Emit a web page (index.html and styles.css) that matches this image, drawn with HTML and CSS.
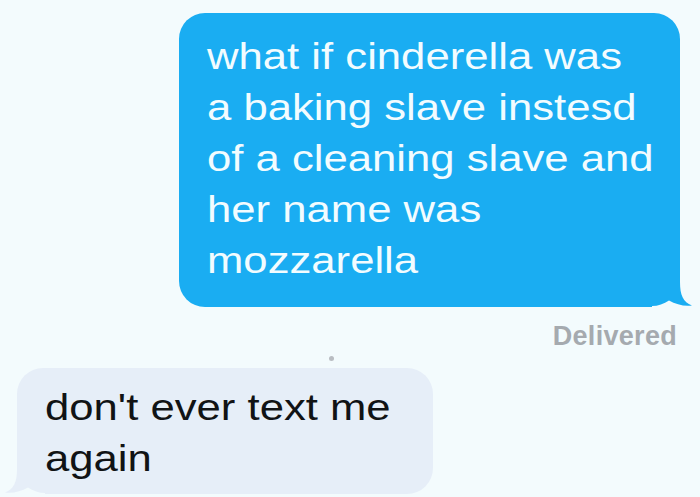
FILE: index.html
```html
<!DOCTYPE html>
<html>
<head>
<meta charset="utf-8">
<link rel="stylesheet" href="styles.css">
</head>
<body>
<div class="thread">
  <div class="bubble out">
    <span class="txt">what if cinderella was<br>a baking slave instesd<br>of a cleaning slave and<br>her name was<br>mozzarella</span>
    <svg class="tail tail-out" width="42" height="32" viewBox="0 0 42 32">
      <rect x="0" y="0" width="42" height="32" fill="#f3fbfd"/>
      <path d="M0,0 H28 V6 C28,19 31,26 40,29.5 C32,30.5 24,28.5 17,24.5 C12,28 6,30 0,30 Z" fill="#1aadf2"/>
    </svg>
  </div>
  <div class="status">Delivered</div>
  <div class="dot"></div>
  <div class="bubble in">
    <span class="txt">don't ever text me<br>again</span>
    <svg class="tail tail-in" width="42" height="32" viewBox="0 0 42 32">
      <rect x="0" y="0" width="42" height="32" fill="#f3fbfd"/>
      <path d="M42,0 H14 V6 C14,19 11,26 2,29.5 C10,30.5 18,28.5 25,24.5 C30,28 36,30 42,30 Z" fill="#e6eef8"/>
    </svg>
  </div>
</div>
</body>
</html>
```

FILE: styles.css
```css
html, body {
  margin: 0;
  padding: 0;
  background: #f3fbfd;
  overflow: hidden;
}

body {
  width: 700px;
  height: 497px;
  font-family: "Liberation Sans", Arial, Helvetica, sans-serif;
}

.thread {
  display: flex;
  flex-direction: column;
  padding-top: 13px;
}

.bubble {
  position: relative;
  box-sizing: border-box;
  border-radius: 26px;
  font-size: 37px;
  line-height: 51px;
}

.txt {
  display: inline-block;
  white-space: nowrap;
  transform: scaleX(1.18);
  transform-origin: 0 0;
}

.out {
  margin-left: 179px;
  width: 501px;
  padding: 18px 0 21px 28px;
  background: #1aadf2;
  color: #f2fcff;
}

.in {
  margin-left: 17px;
  width: 416px;
  margin-top: 7px;
  padding: 14px 0 10px 28px;
  background: #e6eef8;
  color: #111315;
}

.tail {
  position: absolute;
  display: block;
}

.tail-out {
  right: -14px;
  bottom: -1px;
}

.tail-in {
  left: -14px;
  bottom: -1px;
}

.status {
  align-self: flex-end;
  margin-top: 14px;
  padding-right: 23px;
  font-size: 27px;
  line-height: 30px;
  font-weight: 700;
  color: #a5aaaf;
  letter-spacing: 0.3px;
}

.dot {
  margin-left: 329px;
  margin-top: 5px;
  width: 5px;
  height: 5px;
  border-radius: 50%;
  background: #b9bdc2;
}
```
